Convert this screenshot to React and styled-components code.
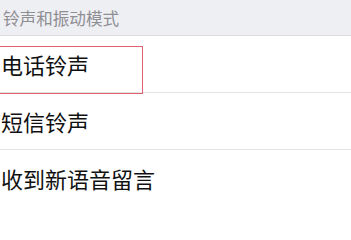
import React from 'react'
import styled, { createGlobalStyle } from 'styled-components'

const GlobalStyle = createGlobalStyle`
  html, body {
    margin: 0;
    padding: 0;
    background: #ffffff;
  }
  body {
    font-family: "Noto Sans CJK SC", "Noto Sans", sans-serif;
  }
`

const Screen = styled.div`
  width: 351px;
  height: 205px;
  overflow: hidden;
  background: #ffffff;
`

const SectionHeader = styled.div`
  height: 35px;
  display: flex;
  align-items: center;
  padding-left: 3px;
  background: #eeeff3;
  border-bottom: 1px solid #dcdce0;
  color: #8e8e93;
  font-size: 16.6px;
`

const Row = styled.div`
  position: relative;
  height: 56px;
  display: flex;
  align-items: center;
  padding-left: 1px;
  border-bottom: 1px solid #e3e3e6;
  color: #111111;
  font-size: 22px;
`

const Highlight = styled.div`
  position: absolute;
  top: 10px;
  left: -2px;
  width: 145px;
  height: 48px;
  box-sizing: border-box;
  border: 1.5px solid #e2636f;
  pointer-events: none;
`

const items = ['电话铃声', '短信铃声', '收到新语音留言']

export default function App() {
  return (
    <Screen>
      <GlobalStyle />
      <SectionHeader>铃声和振动模式</SectionHeader>
      {items.map((label, i) => (
        <Row key={label}>
          {label}
          {i === 0 && <Highlight />}
        </Row>
      ))}
    </Screen>
  )
}
